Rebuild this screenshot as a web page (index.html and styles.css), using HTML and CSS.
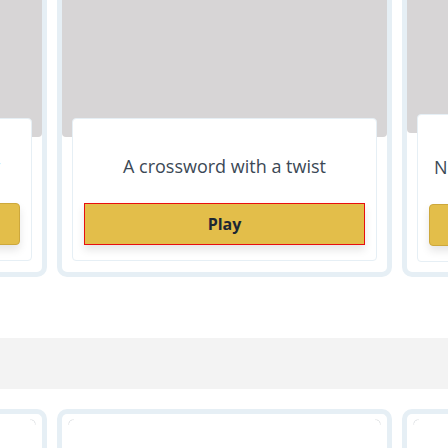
FILE: index.html
```html
<!DOCTYPE html>
<html lang="en">
<head>
<meta charset="utf-8">
<title>Games</title>
<link rel="stylesheet" href="styles.css">
</head>
<body>
<div class="page">
  <div class="row">
    <div class="card">
      <div class="thumb"></div>
      <div class="body">
        <p class="title">Test your word skill each day</p>
        <button class="btn">Play</button>
      </div>
    </div>
    <div class="card">
      <div class="thumb"></div>
      <div class="body">
        <p class="title">A crossword with a twist</p>
        <button class="btn btn-focus">Play</button>
      </div>
    </div>
    <div class="card card-alt">
      <div class="thumb"></div>
      <div class="body">
        <p class="title">New puzzles every single day of the week</p>
        <button class="btn">Play</button>
      </div>
    </div>
  </div>
  <div class="band"></div>
  <div class="row row2">
    <div class="card card2"><div class="thumb2"></div></div>
    <div class="card card2"><div class="thumb2"></div></div>
    <div class="card card2"><div class="thumb2"></div></div>
  </div>
</div>
</body>
</html>
```
FILE: styles.css
```css
html, body {
  margin: 0;
  padding: 0;
  background: #ffffff;
  overflow: hidden;
  font-family: "Open Sans", "Noto Sans", sans-serif;
}
.page {
  width: 448px;
  height: 448px;
  overflow: hidden;
}
.row {
  display: flex;
  gap: 10px;
  margin-left: -288px;
  margin-top: -30px;
}
.card {
  flex: 0 0 335px;
  width: 335px;
  min-width: 0;
  box-sizing: border-box;
  border: 5px solid #e6eff5;
  border-radius: 10px;
  background: #ffffff;
  display: flex;
  flex-direction: column;
}
.thumb {
  height: 162px;
  background: #d7d5d6;
  border-radius: 5px 5px 4px 4px;
}
.card-alt .thumb {
  height: 158px;
}
.card-alt .body {
  padding-top: 40px;
}
.body {
  margin: -19px 10px 10px;
  min-width: 0;
  border: 1px solid #e6eff5;
  border-radius: 4px;
  background: #ffffff;
  padding: 35px 11px 15px;
  display: flex;
  flex-direction: column;
  align-items: stretch;
  overflow: hidden;
}
.title {
  margin: 0 5px;
  font-size: 18px;
  line-height: 24px;
  color: #3b4855;
  text-align: center;
  white-space: nowrap;
}
.btn {
  margin-top: 25px;
  height: 42px;
  box-sizing: border-box;
  border: 1px solid #cda83c;
  border-radius: 4px;
  background: #e3be4a;
  color: #1c2733;
  font-family: "Open Sans", "Noto Sans", sans-serif;
  font-weight: 700;
  font-size: 16px;
  box-shadow: 0 5px 8px rgba(0, 0, 0, 0.10);
}
.btn-focus {
  border-color: #e80f0f;
  border-radius: 0;
}
.band {
  height: 51px;
  margin-top: 61px;
  background: #f3f3f3;
}
.row2 {
  margin-top: 20px;
}
.card2 {
  height: 80px;
  border-bottom: none;
  border-radius: 10px 10px 0 0;
}
.thumb2 {
  margin: 5px 6px 0;
  height: 40px;
  background:
    radial-gradient(circle at 5px 5px, transparent 3.5px, #dcdfe2 4px, transparent 5px) no-repeat left top / 6px 6px,
    radial-gradient(circle at 1px 5px, transparent 3.5px, #dcdfe2 4px, transparent 5px) no-repeat right top / 6px 6px;
}
```
